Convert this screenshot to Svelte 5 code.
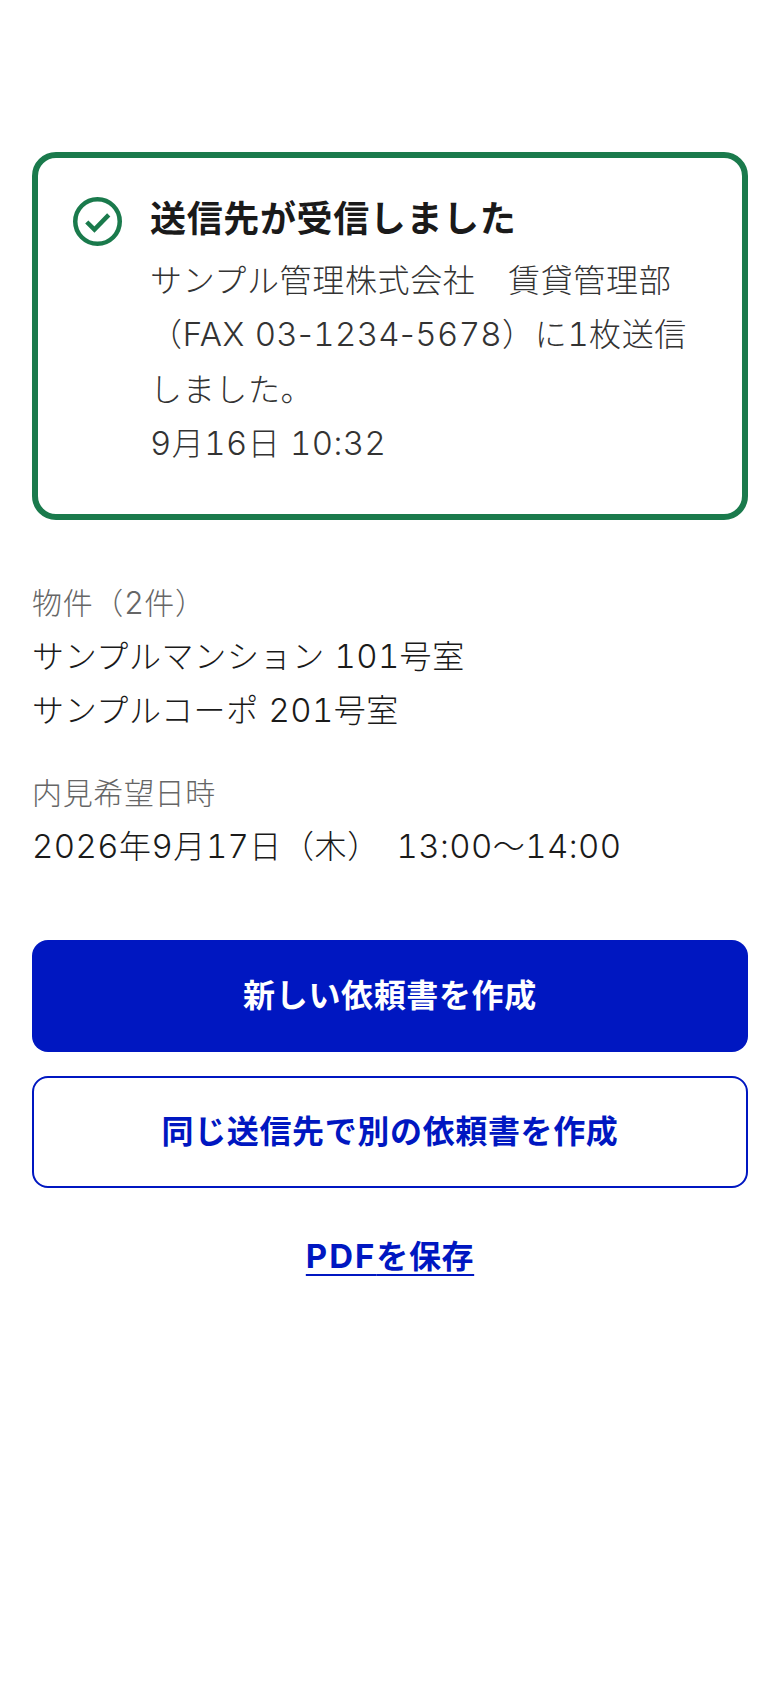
<script>
  const items = [
    { name: 'サンプルマンション ', num: '101', room: '号室' },
    { name: 'サンプルコーポ ', num: '201', room: '号室' }
  ];
</script>

<main class="page">
  <section class="notice">
    <svg class="icon" viewBox="0 0 48 48" aria-hidden="true">
      <circle cx="24" cy="24" r="21.8" fill="none" stroke="#1a7a4c" stroke-width="4.4" />
      <path d="M13.5 24.5 L21 32 L35 17.5" fill="none" stroke="#1a7a4c" stroke-width="4.4" />
    </svg>
    <div class="notice-body">
      <h1>送信先が受信しました</h1>
      <p>サンプル管理株式会社　賃貸管理部（<span class="lat word">FAX</span> <span class="lat">03</span>-<span class="lat">1234</span>-<span class="lat">5678</span>）に<span class="lat">1</span>枚送信しました。</p>
      <p><span class="lat">9</span>月<span class="lat">16</span>日 <span class="lat">10:32</span></p>
    </div>
  </section>

  <section class="detail first">
    <div class="label">物件（<span class="lat">2</span>件）</div>
    {#each items as item}
      <div class="value">{item.name}<span class="lat">{item.num}</span>{item.room}</div>
    {/each}
  </section>

  <section class="detail second">
    <div class="label">内見希望日時</div>
    <div class="value"><span class="lat">2026</span>年<span class="lat">9</span>月<span class="lat">17</span>日（木）　<span class="lat">13:00</span>〜<span class="lat">14:00</span></div>
  </section>

  <div class="actions">
    <button class="btn primary">新しい依頼書を作成</button>
    <button class="btn outline">同じ送信先で別の依頼書を作成</button>
    <a class="link" href="#top"><span class="lat word pdf">PDF</span>を保存</a>
  </div>
</main>

<style>
  :global(body) {
    margin: 0;
    background: #fff;
    font-family: Inter, "Noto Sans CJK JP", sans-serif;
  }
  .page {
    box-sizing: border-box;
    min-height: 1688px;
    padding: 152px 32px 0;
    color: #1a1a1a;
    font-size: 32px;
    font-weight: 300;
    letter-spacing: 0.02em;
    line-height: 54.4px;
  }
  .lat {
    font-size: 1.03em;
    letter-spacing: 0.012em;
    font-variant-numeric: tabular-nums;
    line-height: 1;
  }
  .word {
    letter-spacing: 0.02em;
  }
  .pdf {
    letter-spacing: 0.06em;
  }
  .notice {
    display: flex;
    gap: 28px;
    border: 6px solid #1a7a4c;
    border-radius: 24px;
    padding: 34px 32px 42px 35px;
  }
  .icon {
    flex: none;
    width: 49px;
    height: 49px;
    margin-top: 5px;
  }
  .notice-body {
    min-width: 0;
    flex: 1;
    color: #333;
  }
  h1 {
    margin: 0 0 8px;
    font-size: 36px;
    line-height: 54px;
    font-weight: 700;
    color: #1a1a1a;
  }
  p {
    margin: 0;
  }
  .detail.first {
    margin-top: 57px;
  }
  .detail.second {
    margin-top: 29px;
  }
  .label {
    font-size: 30px;
    line-height: 53px;
    color: #666;
  }
  .value {
    line-height: 54.4px;
  }
  .actions {
    display: flex;
    flex-direction: column;
    align-items: stretch;
    margin-top: 65px;
  }
  .btn {
    box-sizing: border-box;
    height: 112px;
    border-radius: 16px;
    font: inherit;
    font-weight: 700;
    font-size: 32px;
    letter-spacing: 0.02em;
  }
  .primary {
    background: #0017c1;
    border: none;
    color: #fff;
  }
  .outline {
    margin-top: 24px;
    background: #fff;
    border: 2px solid #0017c1;
    color: #0017c1;
  }
  .link {
    align-self: center;
    margin-top: 42px;
    color: #0017c1;
    font-weight: 700;
    font-size: 32px;
    text-decoration-thickness: 2px;
    text-underline-offset: 6px;
  }
</style>
